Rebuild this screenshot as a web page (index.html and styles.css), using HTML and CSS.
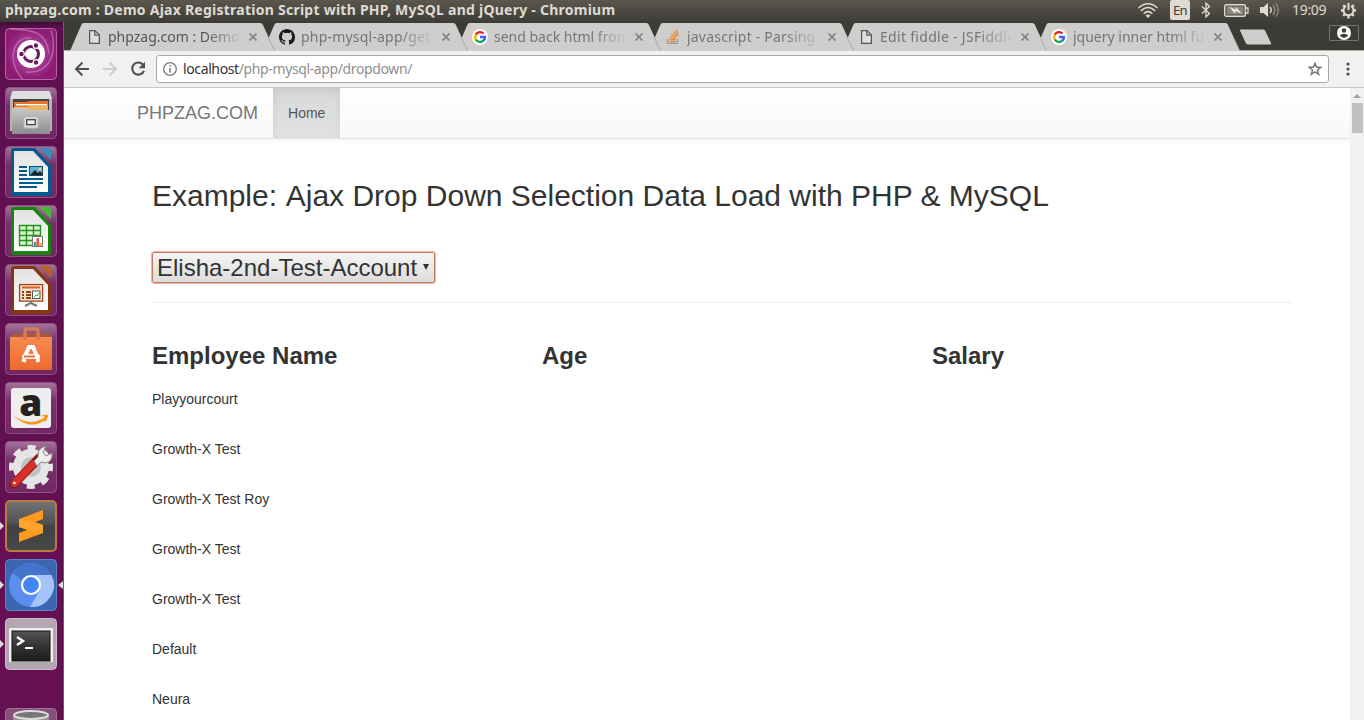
FILE: index.html
```html
<!DOCTYPE html>
<html lang="en">
<head>
<meta charset="utf-8">
<title>phpzag.com : Demo Ajax Registration Script with PHP, MySQL and jQuery</title>
<link rel="stylesheet" href="styles.css">
</head>
<body>
<svg width="0" height="0" class="defs">
  <defs>
    <linearGradient id="gloss" x2="0" y2="1"><stop offset="0" stop-color="#fff" stop-opacity=".42"/><stop offset=".35" stop-color="#fff" stop-opacity=".14"/><stop offset="1" stop-color="#fff" stop-opacity=".1"/></linearGradient>
    <linearGradient id="paper" x2="0" y2="1"><stop offset="0" stop-color="#e2e2e2"/><stop offset="1" stop-color="#fff"/></linearGradient>
    <linearGradient id="steel" x2="0" y2="1"><stop offset="0" stop-color="#c9c9c9"/><stop offset="1" stop-color="#8c8c8c"/></linearGradient>
    <linearGradient id="bag" x2="0" y2="1"><stop offset="0" stop-color="#f68a50"/><stop offset="1" stop-color="#ee6a2e"/></linearGradient>
    <linearGradient id="screen" x2="0" y2="1"><stop offset="0" stop-color="#555"/><stop offset=".5" stop-color="#333"/><stop offset="1" stop-color="#1c1c1c"/></linearGradient>
    <linearGradient id="dark" x2="0" y2="1"><stop offset="0" stop-color="#747474"/><stop offset=".45" stop-color="#505050"/><stop offset=".5" stop-color="#424242"/><stop offset="1" stop-color="#484848"/></linearGradient>
    <radialGradient id="dash"><stop offset="0" stop-color="#8c2080"/><stop offset=".6" stop-color="#a2358f"/><stop offset="1" stop-color="#8d1c72"/></radialGradient>
    <symbol id="tile" viewBox="0 0 52 52"><rect x=".5" y=".5" width="51" height="51" rx="4" fill="url(#gloss)" stroke="#8d5184"/></symbol>
    <symbol id="google" viewBox="0 0 16 16"><circle cx="8" cy="8" r="8" fill="#fff"/><g fill="none" stroke-width="2.4"><path d="M3.8 5.6A4.9 4.9 0 0 1 11.5 4.5" stroke="#ea1c1c"/><path d="M3.9 10.6A4.9 4.9 0 0 1 3.9 5.5" stroke="#fbb400"/><path d="M11.3 11.7A4.9 4.9 0 0 1 3.8 10.5" stroke="#0cab4e"/><path d="M8 8h5A4.9 4.9 0 0 1 11.2 11.8" stroke="#4262f0"/></g></symbol>
    <symbol id="file" viewBox="0 0 16 16"><path d="M3.600 1.600h5.400l4.400 4.400v8.400H3.600z" fill="#f7f7f7" fill-opacity=".4" stroke="#555" stroke-width="1.2"/><path d="M8.800 1.800v4.300h4.400" fill="none" stroke="#555" stroke-width="1.2"/></symbol>
    <symbol id="close" viewBox="0 0 8 8"><path d="M.5.5l7 7M7.500.5L.5 7.500" stroke="#858585" stroke-width="1.7"/></symbol>
    <symbol id="shape" viewBox="0 0 206 28"><path d="M0 28L11.5 1.5Q12 0 13.5 0H190.5Q192 0 192.700 1.5L205 28z" class="tab-fill"/><path d="M198 14L204.800 28" class="tab-line"/></symbol>
  </defs>
</svg>

<header class="panel">
  <span class="panel-title">phpzag.com : Demo Ajax Registration Script with PHP, MySQL and jQuery - Chromium</span>
  <div class="indicators">
    <svg class="wifi" width="20" height="16" viewBox="0 0 20 16" fill="none" stroke="#dfdbd2" stroke-width="1.5"><path d="M.5 6Q10-2.500 19.500 6M3 9Q10 2 17 9M5.700 11.700Q10 7.500 14.300 11.700"/><path d="M7.500 13.500Q10 11.500 12.500 13.500L10 16z" fill="#dfdbd2" stroke="none"/></svg>
    <span class="lang">En</span>
    <svg class="bt" width="10" height="16" viewBox="0 0 10 16" fill="none" stroke="#dfdbd2" stroke-width="1.3"><path d="M1 4.500l7.500 7L5 15V1l3.500 3.500L1 11.500"/></svg>
    <svg class="batt" width="25" height="13" viewBox="0 0 25 13"><rect x=".7" y=".7" width="20.600" height="11.600" rx="1.500" fill="none" stroke="#dfdbd2" stroke-width="1.4"/><rect x="2.500" y="2.500" width="17" height="8" fill="#8a877f"/><path d="M22 4h2v5h-2" fill="none" stroke="#dfdbd2" stroke-width="1.300"/><path d="M5 2.500l6.500 3 .5-2.500 6 7-6.500-3-.5 3z" fill="#e8e4dc"/></svg>
    <svg class="vol" width="20" height="16" viewBox="0 0 20 16" fill="none" stroke="#dfdbd2" stroke-width="1.400"><path d="M0 5h3.500L8 1v14L3.500 11H0z" fill="#dfdbd2" stroke="none"/><path d="M10 5Q12.500 8 10 11"/><path d="M13 3Q16.500 8 13 13M16 1.500Q20.500 8 16 14.500" stroke="#8b887f"/></svg>
    <span class="clock">19:09</span>
    <svg class="cog" width="17" height="17" viewBox="0 0 17 17" fill="none" stroke="#dfdbd2"><path d="M6 4A5 5 0 1 0 11 4" stroke-width="2"/><path d="M8.500 1v7" stroke-width="2"/><path d="M1 8.500h2M14 8.500h2M3.200 3.200l1.500 1.500M13.800 3.200l-1.500 1.500M3.200 13.800l1.500-1.500M13.800 13.800l-1.500-1.500M8.500 14v2.500" stroke-width="2.400"/></svg>
  </div>
</header>

<div class="desktop">
<nav class="launcher">
  <svg class="app" viewBox="0 0 52 52"><rect x=".5" y=".5" width="51" height="51" rx="4" fill="url(#dash)" stroke="#b764a7"/><g fill="none" stroke="#d79acb" stroke-opacity=".55" stroke-width="1.300"><path d="M18 51C2 36 6 8 26 10M46 2C53 26 44 46 21 44M5 1C20 2 42 0 44 26"/></g><circle cx="26" cy="26" r="14" fill="#fff"/><circle cx="26" cy="26" r="7.500" fill="none" stroke="#6a175c" stroke-width="3"/><g fill="#6a175c" stroke="#fff" stroke-width="1.200"><circle cx="16.500" cy="26" r="2.800"/><circle cx="31" cy="17.500" r="2.800"/><circle cx="31" cy="34.500" r="2.800"/></g></svg>
  <svg class="app" viewBox="0 0 52 52"><use href="#tile"/><path d="M7 5q0-1 2-1h34q2 0 2 1l2 7v32H5V12z" fill="#dedede"/><path d="M5 12h42v32H5z" fill="#b5b5b5"/><path d="M8 12h36v13H8z" fill="#444"/><path d="M9 15h13l2-1h19v7H9z" fill="#e9702d"/><path d="M11 17h31v1.500H11z" fill="#fff"/><path d="M9 20h13l2-1.500h19V23H9z" fill="#f5b35e"/><path d="M7 21h14l3 2h21v24H7z" fill="url(#steel)"/><rect x="19" y="30" width="14" height="11" rx="2" fill="#ddd" stroke="#bbb"/><rect x="21.700" y="32.700" width="8.600" height="5" fill="#eee" stroke="#444" stroke-width="1.300"/></svg>
  <svg class="app" viewBox="0 0 52 52"><use href="#tile"/><path d="M9 2h21l16 18v28q0 2-2 2H8q-2 0-2-2V5q0-3 3-3z" fill="#06598c"/><path d="M34 2h10q2 0 2 2v10z" fill="#3d8db9"/><path d="M9 5h19l15 16v25H9z" fill="url(#paper)"/><path d="M14 21h8M14 25h8M14 29h8M14 33h24M14 37h24M14 41h18" stroke="#06598c" stroke-width="2"/><rect x="24.500" y="20.500" width="13" height="9" fill="#5eb4df" stroke="#164d70"/><path d="M25 29l5-5 3 3 2-2 3 4z" fill="#222"/><circle cx="35" cy="23" r="1.500" fill="#fc5"/></svg>
  <svg class="app" viewBox="0 0 52 52"><use href="#tile"/><path d="M9 2h21l16 18v28q0 2-2 2H8q-2 0-2-2V5q0-3 3-3z" fill="#148610"/><path d="M34 2h10q2 0 2 2v10z" fill="#4cb53e"/><path d="M9 5h19l15 16v25H9z" fill="url(#paper)"/><path d="M14.500 20.500h21v20h-21zM14.500 25.500h21M14.500 30.500h21M14.500 35.500h21M21.500 20.500v20M28.500 20.500v20" fill="#d8f2cf" stroke="#24931c" stroke-width="1.400"/><rect x="27.500" y="31.500" width="10" height="10" fill="#fff" stroke="#777"/><path d="M30 37v4" stroke="#39b" stroke-width="2.500"/><path d="M32.700 33v8" stroke="#e53" stroke-width="2.500"/><path d="M35.500 38v3" stroke="#fa3" stroke-width="2.500"/></svg>
  <svg class="app" viewBox="0 0 52 52"><use href="#tile"/><path d="M9 2h21l16 18v28q0 2-2 2H8q-2 0-2-2V5q0-3 3-3z" fill="#863711"/><path d="M34 2h10q2 0 2 2v10z" fill="#b5622f"/><path d="M9 5h19l15 16v25H9z" fill="url(#paper)"/><rect x="14.600" y="20.600" width="23" height="16.500" fill="#fbe5d8" stroke="#a84211" stroke-width="1.300"/><path d="M17 23.500h18" stroke="#d9601f" stroke-width="2"/><path d="M17 28h2M17 31h2M17 34h2M21 28h5M21 31h5M21 34h5" stroke="#973b10" stroke-width="1.800"/><rect x="27.500" y="27" width="7.500" height="7.500" fill="#fff" stroke="#555"/><path d="M29 33l2-2 1 1 2-3" stroke="#2a2" fill="none"/><path d="M26 37v2l-6 3M26 39l6 3" stroke="#777" stroke-width="2" fill="none"/></svg>
  <svg class="app" viewBox="0 0 52 52"><use href="#tile"/><path d="M5 14l4-4h34l4 4z" fill="#a9583f"/><path d="M5 14h42v33H5z" fill="url(#bag)"/><path d="M20 17V8q0-2 2-2h9q2 0 2 2v9" fill="none" stroke="#d77a59" stroke-width="3.500"/><path d="M18.500 39l1-3M33.500 39l-1-3M20.500 32l3.500-8h4l3.500 8" fill="none" stroke="#fff" stroke-width="4"/><rect x="17" y="31" width="18" height="5" rx="2.500" fill="#fff"/><path d="M19 33.500h11" stroke="#ef7136" stroke-width="2"/></svg>
  <svg class="app" viewBox="0 0 52 52"><use href="#tile"/><rect x="6" y="6" width="40" height="40" rx="3" fill="#eee"/><text x="25.800" y="34" text-anchor="middle" class="amazon">a</text><path d="M8 33Q25 46 40 35l2 2Q24 50 8 33z" fill="#f79617"/><path d="M35 34q6-2 8-1 0 4-4 8 2-5 1-6-1-1-5-1z" fill="#f79617"/></svg>
  <svg class="app" viewBox="0 0 52 52"><use href="#tile"/><circle cx="26" cy="26" r="12" fill="#c4c1c4"/><g fill="none" stroke="#e5e5e5"><circle cx="26" cy="26" r="14" stroke-width="8"/><circle cx="26" cy="26" r="19.500" stroke-width="5" stroke-dasharray="8 7.315" stroke-dashoffset="4"/></g><path d="M34 17L9 43" stroke="#8e1512" stroke-width="9" stroke-linecap="round"/><path d="M28 23L9.500 42.500" stroke="#d82f27" stroke-width="7" stroke-linecap="round"/><circle cx="9.500" cy="42" r="1.300" fill="#fff"/><path d="M29 20l4-4q-1-9 8-11l-3 6 3 4 6-3q1 9-7 10l-4-1-4 4z" fill="#eee" stroke="#888"/></svg>
  <div class="slot"><svg class="app" viewBox="0 0 52 52"><rect x="1" y="1" width="50" height="50" rx="4" fill="url(#dark)" stroke="#b97b42" stroke-width="2"/><path d="M14 19l24-9v9l-8 3 8 3v8L14 42v-9l8-3-8-3z" fill="#ff9a20"/><path d="M14 19v8l24 6v-8z" fill="#ffa42e"/></svg><i class="mark"></i></div>
  <div class="slot"><svg class="app" viewBox="0 0 52 52"><rect x=".5" y=".5" width="51" height="51" rx="4" fill="#3c65b2" stroke="#5f83c6"/><circle cx="26" cy="26" r="22" fill="#5c8df0"/><path d="M26 4A22 22 0 0 1 46.500 16H26A10 10 0 0 0 17 22L8 14Q15 4 26 4z" fill="#4375cc"/><path d="M26 16h20.500A22 22 0 0 1 25 48l10-17z" fill="#a5c3fb"/><circle cx="26" cy="26" r="9" fill="#4285f4" stroke="#fff" stroke-width="2.200"/></svg><i class="mark"></i><i class="mark focus"></i></div>
  <div class="slot"><svg class="app" viewBox="0 0 52 52"><rect x=".5" y=".5" width="51" height="51" rx="4" fill="#b5a5b3" stroke="#cbbdca"/><rect x="4" y="10" width="44" height="36" rx="1" fill="#eee"/><path d="M4 44h44v3H4z" fill="#aaa"/><rect x="7" y="13" width="38" height="30" fill="url(#screen)" stroke="#111"/><path d="M12 19l6 4-6 4" fill="none" stroke="#fff" stroke-width="2.400"/><path d="M20 30h8" stroke="#fff" stroke-width="2"/></svg><i class="mark"></i></div>
  <svg class="app trash" viewBox="0 0 52 52"><rect x=".5" y=".5" width="51" height="51" rx="4" fill="#855079" stroke="#a07199"/><path d="M8 8l3 40h30l3-40z" fill="#979797"/><ellipse cx="26" cy="7" rx="17" ry="4" fill="#777" stroke="#ddd" stroke-width="2"/></svg>
</nav>

<main class="browser">
  <div class="tabstrip">
    <div class="tab active"><svg class="shape"><use href="#shape"/></svg><svg class="fav"><use href="#file"/></svg><span class="label">phpzag.com : Demo</span><svg class="x"><use href="#close"/></svg></div>
    <div class="tab"><svg class="shape"><use href="#shape"/></svg><svg class="fav" viewBox="0 0 16 16"><path fill="#1b1b1b" d="M8 0C3.580 0 0 3.580 0 8c0 3.540 2.290 6.530 5.470 7.590.4.070.55-.17.55-.38 0-.19-.01-.82-.01-1.490-2.010.37-2.530-.49-2.690-.94-.09-.23-.48-.94-.82-1.130-.28-.15-.68-.52-.01-.53.630-.01 1.080.58 1.230.82.720 1.210 1.870.87 2.330.66.070-.52.280-.87.510-1.070-1.780-.2-3.640-.89-3.640-3.950 0-.87.310-1.590.82-2.150-.08-.2-.36-1.020.080-2.120 0 0 .67-.21 2.200.82a7.600 7.600 0 0 1 4 0c1.530-1.040 2.200-.82 2.200-.82.440 1.100.16 1.920.080 2.120.51.560.82 1.270.82 2.150 0 3.070-1.870 3.750-3.650 3.950.29.250.54.730.54 1.480 0 1.070-.01 1.930-.01 2.200 0 .21.150.46.550.38A8.010 8.010 0 0 0 16 8c0-4.420-3.580-8-8-8z"/></svg><span class="label wide">php-mysql-app/get</span><svg class="x"><use href="#close"/></svg></div>
    <div class="tab"><svg class="shape"><use href="#shape"/></svg><svg class="fav"><use href="#google"/></svg><span class="label">send back html from</span><svg class="x"><use href="#close"/></svg></div>
    <div class="tab"><svg class="shape"><use href="#shape"/></svg><svg class="fav" viewBox="0 0 16 16" fill="none"><path d="M2.600 10v4.300h9.800V10" stroke="#999" stroke-width="1.300"/><g stroke="#f48024" stroke-width="1.300"><path d="M4.500 12.300h6M4.600 10l6 .7M5 7.500l5.600 2M6.300 4.800l4.900 3.500M8.600 2.300l3.700 4.800M11.600.5l1.500 5.800"/></g></svg><span class="label wide">javascript - Parsing</span><svg class="x"><use href="#close"/></svg></div>
    <div class="tab"><svg class="shape"><use href="#shape"/></svg><svg class="fav"><use href="#file"/></svg><span class="label wider">Edit fiddle - JSFiddle</span><svg class="x"><use href="#close"/></svg></div>
    <div class="tab"><svg class="shape"><use href="#shape"/></svg><svg class="fav"><use href="#google"/></svg><span class="label">jquery inner html fu</span><svg class="x"><use href="#close"/></svg></div>
    <svg class="newtab" width="33" height="16" viewBox="0 0 33 16"><path d="M1 1.500Q.5.500 2 .5h22q1.500 0 2 1L32 14q.5 1.500-1 1.500H9q-1.500 0-2-1z" fill="#cfcecc"/></svg>
    <div class="profile"><svg width="14" height="14" viewBox="0 0 14 14"><circle cx="7" cy="7" r="7" fill="#fff"/><circle cx="7" cy="4.500" r="2.200" fill="#3c3b37"/><path d="M2.600 9.500q4.400-3.500 8.800 0Q7 14 2.600 9.500z" fill="#3c3b37"/></svg></div>
  </div>

  <div class="toolbar">
    <svg class="back" width="16" height="16" viewBox="0 0 16 16" fill="none" stroke="#505050" stroke-width="2"><path d="M15 8H2M8.500 1.500L2 8l6.500 6.500"/></svg>
    <svg class="fwd" width="16" height="16" viewBox="0 0 16 16" fill="none" stroke="#ccc" stroke-width="2"><path d="M1 8h13M7.500 1.500L14 8l-6.500 6.500"/></svg>
    <svg class="reload" width="16" height="16" viewBox="0 0 16 16"><path d="M12.800 3.400A6.100 6.100 0 1 0 14 9.800" fill="none" stroke="#505050" stroke-width="2.100"/><path d="M15 .8v6.400H8.600z" fill="#505050"/></svg>
    <div class="omnibox">
      <svg width="14" height="14" viewBox="0 0 14 14"><circle cx="7" cy="7" r="6.300" fill="none" stroke="#777" stroke-width="1.300"/><path d="M7 6v4.500M7 3.300v1.500" stroke="#777" stroke-width="1.500"/></svg>
      <span class="url"><b>localhost</b>/php-mysql-app/dropdown/</span>
      <svg class="star" width="14" height="14" viewBox="0 0 14 14"><path d="M7 1.300l1.600 4h4.300L9.500 8l1.200 4.400L7 9.900l-3.700 2.500L4.500 8 1.100 5.300h4.300z" fill="none" stroke="#757575" stroke-width="1.400"/></svg>
    </div>
    <svg class="menu" width="4" height="14" viewBox="0 0 4 14" fill="#505050"><circle cx="2" cy="2" r="1.600"/><circle cx="2" cy="7" r="1.600"/><circle cx="2" cy="12" r="1.600"/></svg>
  </div>

  <div class="viewport">
    <div class="page">
      <nav class="navbar"><a class="brand">PHPZAG.COM</a><a class="home">Home</a></nav>
      <section class="content">
        <h2><span class="lead">Example:</span> Ajax Drop Down Selection Data Load with PHP &amp; MySQL</h2>
        <div class="picker">
          <select><option>Elisha-2nd-Test-Account</option></select>
          <svg class="caret" width="6" height="6" viewBox="0 0 6 6"><path d="M0 0h6L3 6z" fill="#333"/></svg>
        </div>
        <div class="grid head"><strong>Employee Name</strong><strong>Age</strong><strong>Salary</strong></div>
        <div class="row">Playyourcourt</div>
        <div class="row">Growth-X Test</div>
        <div class="row">Growth-X Test Roy</div>
        <div class="row">Growth-X Test</div>
        <div class="row">Growth-X Test</div>
        <div class="row">Default</div>
        <div class="row">Neura</div>
      </section>
    </div>
    <div class="scrollbar"><svg width="8" height="4" viewBox="0 0 8 4"><path d="M0 4l4-4 4 4z" fill="#a3a3a3"/></svg><div class="thumb"></div></div>
  </div>
</main>
</div>
</body>
</html>
```
FILE: styles.css
```css
* { box-sizing: border-box; }
body { margin: 0; width: 1364px; height: 720px; overflow: hidden; display: flex; flex-direction: column; font-family: "Liberation Sans", Arial, sans-serif; background: #fff; color: #333; }
svg { display: block; flex: none; }
.defs { position: absolute; }

.panel { height: 22px; flex: none; display: flex; justify-content: space-between; align-items: center; background: linear-gradient(#5a574e, #3d3c37); color: #dfdbd2; font-family: "Noto Sans", "Open Sans", sans-serif; padding: 0 7px 2px 5px; }
.panel-title { font-size: 14px; line-height: 18px; font-weight: 700; letter-spacing: .25px; white-space: nowrap; }
.indicators { display: flex; align-items: center; }
.lang { width: 20px; height: 20px; margin: 0 11px 0 12px; border-radius: 2px; background: #dfdbd2; color: #3c3b37; font-size: 13px; letter-spacing: -.6px; line-height: 20px; text-align: center; }
.batt { margin-left: 13px; }
.vol { margin-left: 11px; }
.clock { width: 39px; margin: 0 9px 0 12px; font-size: 14px; letter-spacing: -.3px; line-height: 18px; white-space: nowrap; }

.desktop { flex: 1; min-height: 0; display: flex; }
.launcher { width: 64px; flex: none; display: flex; flex-direction: column; gap: 7px; padding: 6px 0 0 5px; background: linear-gradient(#3f0c3b, #5f0f50 7px, #651053); border-right: 1px solid #894b80; box-shadow: inset -1px 0 #4f0d43; overflow: hidden; }
.app { width: 52px; height: 52px; }
.trash { margin-top: 31px; }
.slot { position: relative; flex: none; }
.mark { position: absolute; left: -5px; top: 22px; border: 4px solid transparent; border-left-color: #ddd; border-right-width: 0; }
.mark.focus { left: 53px; border-left-width: 0; border-right: 5px solid #ddd; }
.amazon { font: 800 37px "Open Sans", sans-serif; fill: #222; }

.browser { flex: 1; min-width: 0; display: flex; flex-direction: column; }
.tabstrip { height: 29px; flex: none; display: flex; align-items: flex-start; padding: 1px 5px 0 6px; background: linear-gradient(#3c3b36 28px, #b0afad 28px); }
.tab { position: relative; width: 206px; height: 28px; flex: none; display: flex; align-items: center; padding: 0 0 1px 16px; margin-right: -13px; font: 14px "Noto Sans", "Open Sans", sans-serif; color: #757575; }
.shape { position: absolute; left: 0; top: 0; width: 206px; height: 28px; }
.tab-fill { fill: #cfcecc; }
.tab-line { fill: none; stroke: #aaa9a7; }
.active .tab-fill { fill: #f2f1f0; }
.active .tab-line { stroke: #b5b5b3; }
.active { color: #555; height: 29px; padding-bottom: 2px; }
.active .tab-fill { fill: #f2f1f0; }
.tab:nth-child(1) { z-index: 6; }
.tab:nth-child(2) { z-index: 5; }
.tab:nth-child(3) { z-index: 4; }
.tab:nth-child(4) { z-index: 3; }
.tab:nth-child(5) { z-index: 2; }
.tab:nth-child(6) { z-index: 1; }
.fav { position: relative; width: 16px; height: 16px; }
.label { position: relative; width: 132px; margin: 0 9px 0 6px; overflow: hidden; white-space: nowrap; -webkit-mask-image: linear-gradient(90deg, #000 98px, transparent 134px); mask-image: linear-gradient(90deg, #000 98px, transparent 134px); }
.wide { letter-spacing: .2px; }
.wider { letter-spacing: .3px; }
.x { position: relative; width: 8px; height: 8px; }
.newtab { margin: 6px 0 0 11px; }
.profile { width: 30px; height: 16px; margin: 2px 0 0 auto; display: flex; align-items: center; justify-content: center; border: 1px solid #77756f; border-radius: 1px; }
/* the active tab runs into the toolbar, so its bottom rule is covered */
.active .shape { height: 28px; border-bottom: 0; box-shadow: none; }
.active::after { content: ""; position: absolute; left: 0; right: 1px; bottom: 0; height: 1px; background: #f2f1f0; }

.toolbar { height: 37px; flex: none; display: flex; align-items: center; padding: 0 14px 0 10px; background: #f2f1f0; border-bottom: 1px solid #c8c7c6; }
.fwd { margin-left: 12px; }
.reload { margin: 0 10px 0 12px; }
.omnibox { flex: 1; height: 28px; display: flex; align-items: center; padding: 0 6px; border: 1px solid #a8a8a8; border-radius: 3px; background: #fff; }
.url { flex: 1; margin-left: 6px; font: 14px/18px "Noto Sans", "Open Sans", sans-serif; letter-spacing: -.38px; color: #8f8f8f; white-space: nowrap; }
.url b { font-weight: 400; color: #333; }
.menu { margin-left: 17px; }

.viewport { flex: 1; min-height: 0; display: flex; }
.page { flex: 1; overflow: hidden; }
.navbar { height: 51px; display: flex; padding-left: 58px; background: linear-gradient(#fff, #f8f8f8); border-bottom: 1px solid #e5e5e5; box-shadow: 0 1px 4px rgba(0,0,0,.07); }
.brand { padding: 15px; font-size: 18px; line-height: 20px; color: #777; }
.home { padding: 15px; font-size: 14px; line-height: 20px; color: #555; background: linear-gradient(#d8d8d8, #e2e2e2); box-shadow: inset 0 3px 9px rgba(0,0,0,.075); }
.content { padding: 40px 58px 0 88px; }
h2 { margin: 0; font-size: 30px; line-height: 33px; font-weight: 500; white-space: nowrap; }
.lead { margin-right: 2px; }
.picker { position: relative; height: 91px; padding-top: 40px; border-bottom: 1px solid #eee; }
.picker select { display: block; width: 283px; height: 31px; padding: 0 4px; appearance: none; border: 1px solid #c8775b; border-radius: 2px; outline: 1px solid #efb7a3; outline-offset: 0; background: linear-gradient(#f5f5f5, #dcdcdc); font: 24px "Liberation Sans", Arial, sans-serif; color: #333; }
.caret { position: absolute; left: 271px; top: 52px; }
.grid { display: grid; grid-template-columns: repeat(3, 390px); }
.head { margin-top: 40px; font-size: 24px; line-height: 26px; height: 46px; }
.row { height: 50px; font-size: 14px; line-height: 20px; }
.scrollbar { width: 14px; display: flex; flex-direction: column; align-items: center; padding-top: 6px; background: #f1f1f1; }
.thumb { width: 11px; height: 30px; margin-top: 5px; background: #c1c1c1; }
```
